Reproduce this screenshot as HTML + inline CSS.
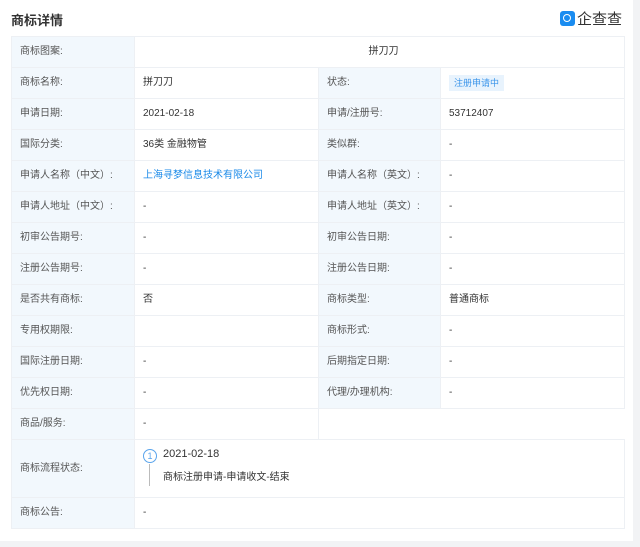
<!DOCTYPE html>
<html><head><meta charset="utf-8"><style>
body{margin:0;width:640px;height:547px;background:#f2f3f5;font-family:"Liberation Sans","Noto Sans CJK SC",sans-serif;overflow:hidden}
.card{position:absolute;left:0;top:0;width:633px;height:541px;background:#fff}
.title{position:absolute;left:11px;top:10px;font-size:13px;font-weight:bold;color:#333}
.logo{position:absolute;left:560px;top:8px;display:flex;align-items:center;font-size:15px;color:#333}
.logo i{display:inline-block;width:15px;height:15px;background:#1a8cf0;border-radius:3px;margin-right:2px;position:relative}
.logo i:after{content:"";position:absolute;left:3px;top:3px;width:6px;height:6px;border:1.5px solid #fff;border-radius:50%}
table{position:absolute;left:11px;top:36px;width:613px;border-collapse:collapse;font-size:10px;color:#333;table-layout:fixed}
td{border:1px solid #edf0f4;height:31px;padding:0 0 0 8px;box-sizing:border-box;vertical-align:middle;line-height:14px}
td.l{background:#f2f8fd;color:#555}
a{color:#1b8ae8;text-decoration:none}
.tag{background:#e8f3fd;color:#3a94ea;padding:3px 5px;font-size:9px}
.step{position:relative;height:56px}
.circ{position:absolute;left:0;top:8px;width:12px;height:12px;border:1px solid #5aa4ec;border-radius:50%;color:#5aa4ec;font-size:9px;text-align:center;line-height:12px}
.line{position:absolute;left:6px;top:23px;width:1px;height:22px;background:#bbb}
</style></head><body>
<div class="card">
<div class="title">商标详情</div>
<div class="logo"><i></i>企查查</div>
<table>
<colgroup><col style="width:123px"><col style="width:184px"><col style="width:122px"><col style="width:184px"></colgroup>
<tr><td class="l">商标图案:</td><td colspan="3" style="text-align:center">拼刀刀</td></tr>
<tr><td class="l">商标名称:</td><td>拼刀刀</td><td class="l">状态:</td><td><span class="tag">注册申请中</span></td></tr>
<tr><td class="l">申请日期:</td><td>2021-02-18</td><td class="l">申请/注册号:</td><td>53712407</td></tr>
<tr><td class="l">国际分类:</td><td>36类 金融物管</td><td class="l">类似群:</td><td>-</td></tr>
<tr><td class="l">申请人名称（中文）:</td><td><a>上海寻梦信息技术有限公司</a></td><td class="l">申请人名称（英文）:</td><td>-</td></tr>
<tr><td class="l">申请人地址（中文）:</td><td>-</td><td class="l">申请人地址（英文）:</td><td>-</td></tr>
<tr><td class="l">初审公告期号:</td><td>-</td><td class="l">初审公告日期:</td><td>-</td></tr>
<tr><td class="l">注册公告期号:</td><td>-</td><td class="l">注册公告日期:</td><td>-</td></tr>
<tr><td class="l">是否共有商标:</td><td>否</td><td class="l">商标类型:</td><td>普通商标</td></tr>
<tr><td class="l">专用权期限:</td><td></td><td class="l">商标形式:</td><td>-</td></tr>
<tr><td class="l">国际注册日期:</td><td>-</td><td class="l">后期指定日期:</td><td>-</td></tr>
<tr><td class="l">优先权日期:</td><td>-</td><td class="l">代理/办理机构:</td><td>-</td></tr>
<tr><td class="l">商品/服务:</td><td>-</td><td colspan="2" style="border:none;border-top:1px solid #edf0f4"></td></tr>
<tr><td class="l" style="height:58px">商标流程状态:</td><td colspan="3"><div class="step"><div class="circ">1</div><div style="position:absolute;left:20px;top:6px;font-size:11px">2021-02-18</div><div class="line"></div><div style="position:absolute;left:20px;top:30px;font-size:10px">商标注册申请-申请收文-结束</div></div></td></tr>
<tr><td class="l">商标公告:</td><td colspan="3">-</td></tr>
</table>
</div>
</body></html>
